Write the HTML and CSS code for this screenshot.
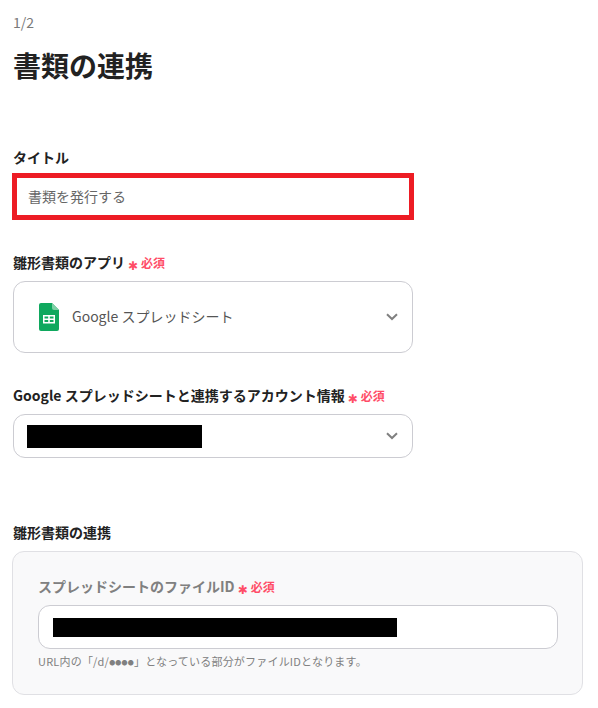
FILE: index.html
```html
<!DOCTYPE html>
<html>
  <head>
    <meta charset="utf-8">
    <link rel="stylesheet" href="styles.css">
    <title>書類の連携</title>
  </head>
  <body>
    <p class="step">1/2</p>
    <h1 class="page-heading">書類の連携</h1>

    <div class="field title-field">
      <p class="field-label">タイトル</p>
      <div class="title-input">書類を発行する</div>
    </div>

    <div class="field app-field">
      <p class="field-label">雛形書類のアプリ<span class="required"><span class="required-mark">✱</span>必須</span></p>
      <div class="select app-select">
        <svg class="sheets-icon" width="20" height="28" viewBox="0 0 20 28">
          <path d="M2 0H13L20 7V26a2 2 0 0 1-2 2H2a2 2 0 0 1-2-2V2a2 2 0 0 1 2-2Z" fill="#0fa85e"/>
          <path d="M13 0L20 7H15a2 2 0 0 1-2-2Z" fill="#7fd0a6"/>
          <path d="M4 12H16V20.5H4ZM5.5 13.5V15.5H9.2V13.5ZM10.8 13.5V15.5H14.5V13.5ZM5.5 17V19H9.2V17ZM10.8 17V19H14.5V17Z" fill="#fff" fill-rule="evenodd"/>
        </svg>
        <span class="select-text">Google スプレッドシート</span>
        <svg class="chevron" width="12" height="8" viewBox="0 0 12 8">
          <path d="M1 1.2L6 6L11 1.2" fill="none" stroke="#808080" stroke-width="2"/>
        </svg>
      </div>
    </div>

    <div class="field account-field">
      <p class="field-label">Google スプレッドシートと連携するアカウント情報<span class="required"><span class="required-mark">✱</span>必須</span></p>
      <div class="select account-select">
        <div class="redacted account-redacted"></div>
        <svg class="chevron" width="12" height="8" viewBox="0 0 12 8">
          <path d="M1 1.2L6 6L11 1.2" fill="none" stroke="#808080" stroke-width="2"/>
        </svg>
      </div>
    </div>

    <div class="field link-field">
      <p class="field-label">雛形書類の連携</p>
      <div class="panel">
        <p class="field-label panel-label">スプレッドシートのファイルID<span class="required"><span class="required-mark">✱</span>必須</span></p>
        <div class="id-input">
          <div class="redacted id-redacted"></div>
        </div>
        <p class="help-text">URL内の「/d/<span class="help-dots">●●●●</span>」となっている部分がファイルIDとなります。</p>
      </div>
    </div>
  </body>
</html>
```

FILE: styles.css
```css
body {
  margin: 0;
  padding: 0 15px 0 13px;
  background-color: white;
  color: #222222;
  font-family: "Noto Sans CJK JP", "Noto Sans", sans-serif;
  font-size: 14px;
}

p {
  margin: 0;
}

.step {
  padding-top: 12px;
  height: 20px;
  line-height: 20px;
  color: #7a7a7a;
}

.page-heading {
  margin: 12px 0 0;
  height: 42px;
  line-height: 42px;
  font-size: 28px;
  font-weight: 700;
}

.field-label {
  height: 20px;
  line-height: 18px;
  font-size: 14px;
  font-weight: 700;
}

.title-field {
  margin-top: 62px;
}

.title-input {
  box-sizing: border-box;
  width: 402px;
  height: 47px;
  margin: 5px 0 0 -1px;
  padding-left: 11px;
  border: 5px solid #ed1c24;
  line-height: 36px;
  color: #666666;
}

.app-field {
  margin-top: 33px;
}

.required {
  margin-left: 3px;
  color: #ff4d67;
  font-size: 12px;
}

.required-mark {
  display: inline-block;
  width: 13px;
  font-family: "DejaVu Sans", sans-serif;
  font-size: 12px;
  line-height: 14px;
  vertical-align: -2px;
}

.select {
  box-sizing: border-box;
  display: flex;
  align-items: center;
  width: 400px;
  border: 1px solid #ccccd2;
  border-radius: 12px;
  background-color: white;
}

.app-select {
  height: 72px;
  margin-top: 8px;
  padding: 0 14px 0 25px;
}

.sheets-icon {
  flex-shrink: 0;
}

.select-text {
  margin: 0 0 3px 13px;
  color: #555555;
}

.chevron {
  flex-shrink: 0;
  margin-left: auto;
}

.account-field {
  margin-top: 33px;
}

.account-select {
  height: 44px;
  margin-top: 8px;
  padding: 0 14px 0 13px;
}

.redacted {
  background-color: black;
}

.account-redacted {
  width: 175px;
  height: 23px;
  margin-top: 1px;
}

.link-field {
  margin-top: 65px;
}

.panel {
  box-sizing: border-box;
  width: 571px;
  height: 144px;
  margin: 8px 0 0 -1px;
  padding: 25px 25px 0 25px;
  border: 1px solid #e0e0e4;
  border-radius: 12px;
  background-color: #f9f9fa;
}

.panel-label {
  color: #808080;
}

.id-input {
  box-sizing: border-box;
  display: flex;
  align-items: center;
  width: 520px;
  height: 44px;
  margin-top: 8px;
  padding-left: 14px;
  border: 1px solid #ccccd2;
  border-radius: 12px;
  background-color: white;
}

.id-redacted {
  width: 344px;
  height: 19px;
}

.help-text {
  margin-top: 4px;
  height: 16px;
  line-height: 16px;
  font-size: 11px;
  letter-spacing: 0.2px;
  color: #808080;
}

.help-dots {
  font-size: 6px;
  vertical-align: 1px;
}
```
